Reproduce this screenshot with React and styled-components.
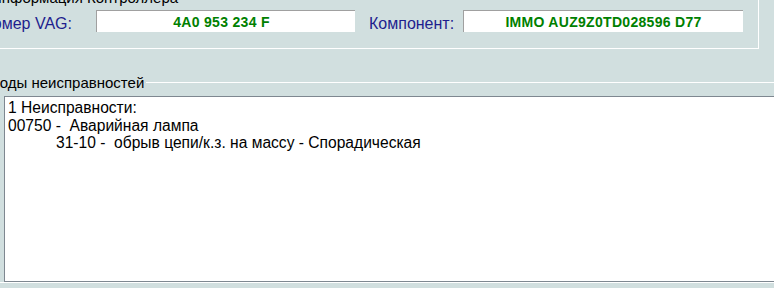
import React from 'react';
import styled, { createGlobalStyle } from 'styled-components';

const Global = createGlobalStyle`
  html, body { margin: 0; padding: 0; background: #d1dfdf; }
  body { font-family: "Liberation Sans", Arial, sans-serif; }
`;

const Viewport = styled.div`
  width: 774px;
  height: 288px;
  overflow: hidden;
  background: #d1dfdf;
`;

const Window = styled.div`
  display: flex;
  flex-direction: column;
  gap: 25px;
  margin: -11px 0 0 -20px;
  width: 820px;
`;

const Group = styled.fieldset`
  box-sizing: border-box;
  margin: 0;
  min-width: 0;
  border: 1px solid #ffffff;
  padding: ${(p) => p.$pad};
  width: ${(p) => p.$width || 'auto'};
`;

const Legend = styled.legend`
  padding: 0 2px;
  font: 15px/17px "Liberation Sans", Arial, sans-serif;
  color: #000;
  white-space: nowrap;
`;

const Row = styled.div`
  display: flex;
  align-items: center;
  height: 22px;
`;

const FieldLabel = styled.label`
  font: 16px "Liberation Sans", Arial, sans-serif;
  color: #1e1e8e;
  white-space: nowrap;
  display: flex;
  justify-content: ${(p) => (p.$stretch ? 'flex-end' : 'flex-start')};
  flex: ${(p) => (p.$stretch ? '1 1 0' : `0 0 ${p.$w}px`)};
  min-width: 0;
  padding-top: 5px;
  margin: ${(p) => p.$margin};
`;

const Field = styled.div`
  box-sizing: border-box;
  flex: 0 0 ${(p) => p.$w}px;
  height: 22px;
  background: #fff;
  border-top: 1px solid #a0a0a0;
  border-left: 1px solid #a0a0a0;
  display: flex;
  align-items: center;
  justify-content: center;
  padding-right: ${(p) => p.$shift || 0}px;
  color: #008000;
  font: bold 14px "Liberation Sans", Arial, sans-serif;
  letter-spacing: 0.3px;
  white-space: nowrap;
`;

const FaultBox = styled.div`
  box-sizing: border-box;
  height: 186px;
  margin-left: 15px;
  background: #fff;
  border: 1px solid #7e8790;
  padding: 2px 3px;
  font: 15.6px/17.5px "Liberation Sans", Arial, sans-serif;
  color: #000;
`;

const Line = styled.div`
  white-space: pre;
  padding-left: ${(p) => (p.$indent ? 48 : 0)}px;
`;

export default function App() {
  return (
    <>
      <Global />
      <Viewport>
        <Window>
          <Group $pad="4px 15px 16px 8px" $width="779px">
            <Legend>Информация Контроллера</Legend>
            <Row>
              <FieldLabel $stretch $margin="0 24px 0 0">Номер VAG:</FieldLabel>
              <Field $w={259} $shift={9}>4A0 953 234 F</Field>
              <FieldLabel $w={82} $margin="0 12px 0 14px">Компонент:</FieldLabel>
              <Field $w={280}>IMMO AUZ9Z0TD028596 D77</Field>
            </Row>
          </Group>
          <Group $pad="5px 0 0 8px">
            <Legend>Коды неисправностей</Legend>
            <FaultBox>
              <Line>1 Неисправности:</Line>
              <Line>00750 -  Аварийная лампа</Line>
              <Line $indent>31-10 -  обрыв цепи/к.з. на массу - Спорадическая</Line>
            </FaultBox>
          </Group>
        </Window>
      </Viewport>
    </>
  );
}
